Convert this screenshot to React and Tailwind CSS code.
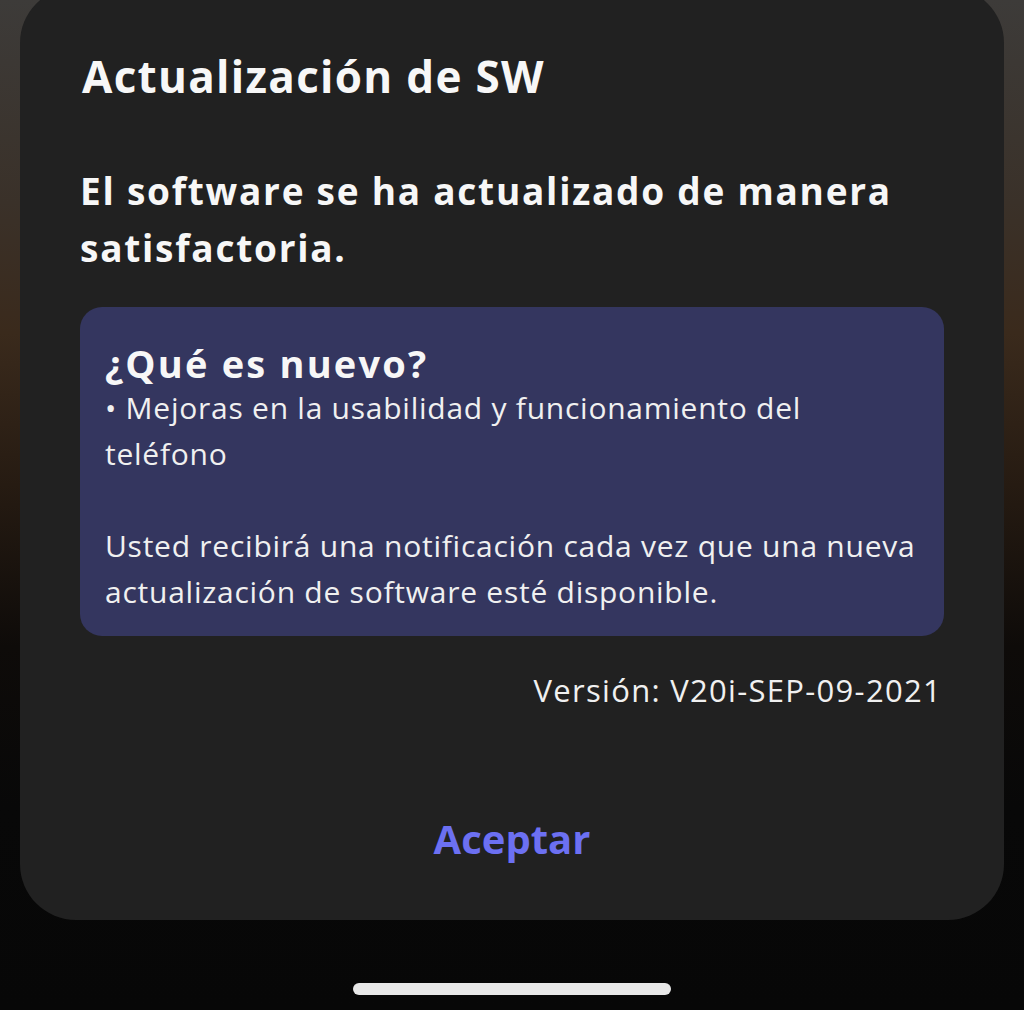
export default function App() {
  return (
    <div
      className="w-[1024px] h-[1010px] overflow-hidden flex flex-col items-stretch bg-[linear-gradient(180deg,#3d3b39_0%,#3a3129_20%,#3a2a1c_33%,#261b12_48%,#0e0b09_64%,#080808_80%,#070707_100%)]"
      style={{ fontFamily: '"Open Sans", "Noto Sans", sans-serif' }}
    >
      {/* Dialog card */}
      <div className="mx-[20px] -mt-[13px] rounded-[56px] bg-[#212121] px-[60px] pt-[61px] pb-[56px]">
        <h1 className="pl-[2px] text-[44px] leading-[56px] font-bold tracking-[1.3px] text-[#f7f7f7]">
          Actualización de SW
        </h1>

        <p className="mt-[58px] text-[37px] leading-[57px] font-bold tracking-[1.75px] text-[#f7f7f7] whitespace-nowrap">
          El software se ha actualizado de manera
          <br />
          satisfactoria.
        </p>

        {/* What's new box */}
        <div className="mt-[31px] rounded-[22px] bg-[#34365f] px-[25px] pt-[35px] pb-[21px]">
          <h2 className="text-[38px] leading-[43px] font-bold tracking-[2.2px] text-[#f7f7f7]">¿Qué es nuevo?</h2>
          <div className="text-[30px] leading-[46px] tracking-[0.75px] text-[#f0f0f0] whitespace-nowrap">
            <p>
              • Mejoras en la usabilidad y funcionamiento del
              <br />
              teléfono
            </p>
            <p className="mt-[46px]">
              Usted recibirá una notificación cada vez que una nueva
              <br />
              actualización de software esté disponible.
            </p>
          </div>
        </div>

        <p className="mt-[34px] text-right pr-[2px] text-[31px] leading-[40px] tracking-[1.3px] text-[#f0f0f0]">
          Versión: V20i-SEP-09-2021
        </p>

        <div className="mt-[104px] flex justify-center">
          <button className="text-[40px] leading-[50px] font-bold text-[#6c70f2]">Aceptar</button>
        </div>
      </div>

      {/* Home indicator */}
      <div className="mt-[63px] flex justify-center">
        <div className="w-[318px] h-[12px] rounded-full bg-[#e8e8e8]" />
      </div>
    </div>
  );
}
